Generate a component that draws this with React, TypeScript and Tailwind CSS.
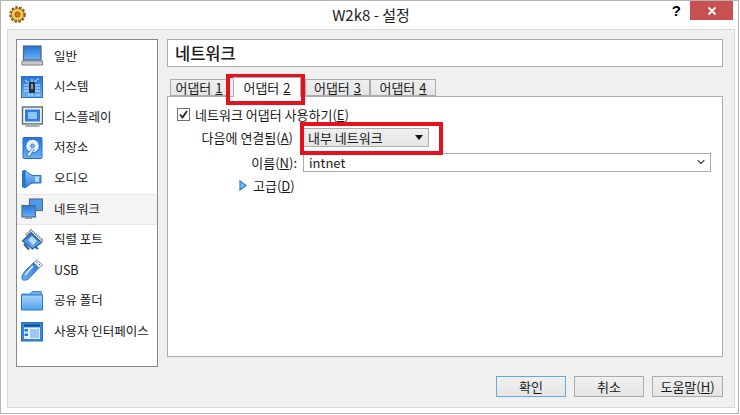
import type { ReactNode } from 'react'
import { ChevronDown } from 'lucide-react'

const font = { fontFamily: '"Noto Sans CJK KR", "Liberation Sans", sans-serif' }

function GearLogo() {
  return (
    <svg width="17" height="17" viewBox="0 0 17 17">
      <circle cx="8.5" cy="8.5" r="6.6" fill="#e3a82c" stroke="#8a5a12" strokeWidth="3.4" strokeDasharray="2.4 1.2" />
      <circle cx="8.5" cy="8.5" r="6" fill="#f4c95e" stroke="#b07a1e" strokeWidth="0.8" />
      <circle cx="8.5" cy="8.5" r="2.6" fill="#c67f16" stroke="#7d5110" strokeWidth="0.8" />
    </svg>
  )
}

const icons: Record<string, ReactNode> = {
  general: (
    <>
      <rect x="2.5" y="1" width="17.5" height="14" fill="url(#blue)" stroke="#5d6872" strokeWidth="1.3" />
      <path d="M1 16 H21.5 V20 H1 Z" fill="#e6e8ea" stroke="#69727b" />
      <path d="M2 18 H20.5" stroke="#a4abb1" />
    </>
  ),
  system: (
    <>
      <rect x="0.5" y="0.5" width="21" height="21" fill="url(#blue)" stroke="#2a6fc4" />
      <path d="M3 9 H8 M3 12 H8 M3 15 H8 M14 9 H19 M14 12 H19 M14 15 H19 M13 6 L18 2.5 M4 4 L8 7 M15 19 H19 M11 3 V6 M11 17 V20 M8 17 V20" stroke="#d4e9fc" strokeWidth="1" />
      <rect x="8" y="6" width="6" height="11" fill="#26343f" />
      <rect x="10" y="8" width="2" height="5" fill="#8d98a0" />
    </>
  ),
  display: (
    <>
      <rect x="1.5" y="1" width="20" height="17" fill="#eef1f3" stroke="#5c6873" strokeWidth="1.4" />
      <rect x="4" y="3.5" width="15" height="12" fill="#2f7de0" />
      <rect x="7" y="6" width="9" height="7" fill="#8ec3f5" />
      <path d="M5 18.5 H18 L19 21 H4 Z" fill="#a9b1b8" />
    </>
  ),
  storage: (
    <>
      <rect x="2" y="0.5" width="19" height="21" rx="1" fill="url(#blue)" stroke="#2a6fc4" />
      <circle cx="11.5" cy="9" r="6.8" fill="#e7f2fc" stroke="#2a6fc4" />
      <circle cx="11.5" cy="9" r="2" fill="#7fb8ee" stroke="#2a6fc4" strokeWidth="0.7" />
      <path d="M11 11.5 L5.5 18 L8.5 19.5 L13.5 12" fill="#dbe9f6" stroke="#2a6fc4" strokeWidth="0.8" />
    </>
  ),
  audio: (
    <>
      <rect x="1" y="2" width="4" height="18" rx="2" fill="#2478cf" />
      <path d="M4 2.5 C7 4.5 9 7 12 7.5 H20 V15 H12 C9 15.5 7 18 4 20 Z" fill="url(#bar)" stroke="#2a6fc4" />
      <rect x="14" y="8.5" width="4" height="5.5" fill="#b5daf8" />
    </>
  ),
  network: (
    <>
      <rect x="8.5" y="1" width="13" height="11.5" fill="#4a9cf0" stroke="#5c6f80" strokeWidth="1.2" />
      <rect x="1" y="7.5" width="13.5" height="11.5" fill="url(#blue)" stroke="#5c6f80" strokeWidth="1.2" />
      <path d="M4 19 H11 V21 H4 Z" fill="#8c9aa6" />
    </>
  ),
  serial: (
    <>
      <path d="M1.5 12 L10 3.5 L20.5 13.5 L11.5 20 Z" fill="url(#blue)" stroke="#2f5d8c" strokeWidth="1.2" />
      <path d="M5 6 L10 1 L21.5 11 L19.5 15" fill="none" stroke="#77838d" strokeWidth="1.8" strokeDasharray="1.5 0.7" />
      <path d="M7 11 L11 7 L16 12 L12 16 Z" fill="#bcdffa" />
      <path d="M3 15 L8 20.5 M14 17.5 L17 20" stroke="#2f5d8c" strokeWidth="2" />
    </>
  ),
  usb: (
    <>
      <path d="M13 3.5 L18 8.5 L8 19.5 C5 22 1 21.5 0.8 19.5 C1 16 3 13 5 11 Z" fill="url(#blue)" stroke="#2a6fc4" />
      <path d="M4 16 L12 7" stroke="#c4e2fb" strokeWidth="2" />
      <path d="M16 0.8 L21.5 6 L18 9 L12.5 3.5 Z" fill="#eceff1" stroke="#6d7780" strokeWidth="0.8" />
      <path d="M15.5 3.5 h1 M18 5.5 h1" stroke="#4d5760" />
    </>
  ),
  folder: (
    <>
      <path d="M1 4 H9 L11 1.5 H20.5 V6 H1 Z" fill="#6db0f2" stroke="#2a78d0" strokeWidth="0.8" />
      <rect x="0.5" y="5" width="21" height="15" fill="url(#folder)" stroke="#2a78d0" />
    </>
  ),
  ui: (
    <>
      <rect x="0.5" y="1.5" width="21" height="18.5" fill="#3584df" stroke="#2a6fc4" />
      <rect x="3" y="3.5" width="16" height="2" fill="#17467f" />
      <rect x="3" y="6.5" width="16" height="11.5" fill="#e5f1fc" />
      <rect x="9" y="8" width="9" height="9" fill="#9cc8f4" />
      <rect x="3.5" y="8" width="3.5" height="2.5" fill="#2878d2" />
      <rect x="3.5" y="12.5" width="3.5" height="2.5" fill="#2878d2" />
    </>
  ),
}

const menu = [
  { key: 'general', label: '일반' },
  { key: 'system', label: '시스템' },
  { key: 'display', label: '디스플레이' },
  { key: 'storage', label: '저장소' },
  { key: 'audio', label: '오디오' },
  { key: 'network', label: '네트워크', active: true },
  { key: 'serial', label: '직렬 포트' },
  { key: 'usb', label: 'USB' },
  { key: 'folder', label: '공유 폴더' },
  { key: 'ui', label: '사용자 인터페이스' },
]

function Tab({ label, hot, active, className }: { label: string; hot: string; active?: boolean; className: string }) {
  return (
    <div
      className={`flex items-center justify-center border border-[#acacac] pb-[1px] ${className} ${
        active ? 'h-[20px] border-b-0 bg-white' : 'h-[17px] bg-gradient-to-b from-[#f0f0f0] to-[#e5e5e5]'
      }`}
    >
      {label} <span className="ml-1 underline">{hot}</span>
    </div>
  )
}

export default function App() {
  return (
    <div className="h-[415px] w-[740px] bg-white">
      <div style={font} className="relative flex h-[414px] w-[739px] flex-col overflow-hidden border border-[#b4b4b4] bg-white pr-[3px] pl-[6px] text-[13px] leading-none text-[#1a1a1a]">
        <svg width="0" height="0" className="absolute">
          <defs>
            <linearGradient id="blue" x1="0" y1="0" x2="0" y2="1">
              <stop offset="0" stopColor="#2274dc" />
              <stop offset="1" stopColor="#6ab2f5" />
            </linearGradient>
            <linearGradient id="bar" x1="0" y1="0" x2="0" y2="1">
              <stop offset="0" stopColor="#8cc4f5" />
              <stop offset="1" stopColor="#2a7fd8" />
            </linearGradient>
            <linearGradient id="folder" x1="0" y1="0" x2="0" y2="1">
              <stop offset="0" stopColor="#a8d6fa" />
              <stop offset="1" stopColor="#4fa2ef" />
            </linearGradient>
          </defs>
        </svg>

        <header className="relative flex h-[28px] shrink-0 items-center justify-center pb-[2px]">
          <div className="absolute top-[5px] left-[2px]"><GearLogo /></div>
          <span className="text-[15px] text-[#222]">W2k8 - 설정</span>
          <span className="absolute top-[2px] right-[54px] text-[15px] font-bold text-black" style={{ fontFamily: '"Liberation Sans", sans-serif' }}>?</span>
          <div className="absolute top-0 right-[2px] flex h-[19px] w-[43px] items-center justify-center bg-[#c75050]">
            <svg width="10" height="10" viewBox="0 0 10 10"><path d="M1.5 1.5 L8.5 8.5 M8.5 1.5 L1.5 8.5" stroke="#fff" strokeWidth="1.8" /></svg>
          </div>
        </header>

        <div className="flex h-[379px] flex-col border border-[#d9d9d9] bg-[#f0f0f0]">
          <div className="flex h-[327px] gap-[9px] pt-[9px] pl-[8px]">
            <nav className="flex h-[328px] w-[142px] shrink-0 flex-col border border-[#828790] bg-white pt-[1px]">
              {menu.map((m) => (
                <div
                  key={m.key}
                  className={`flex h-[30.6px] shrink-0 items-center gap-[11px] pl-[4px] ${
                    m.active ? 'border-y border-[#e6e6e6] bg-[#f5f5f5]' : ''
                  }`}
                >
                  <svg width="22" height="22" viewBox="0 0 22 22" className="shrink-0">{icons[m.key]}</svg>
                  <span className="pb-[1px] text-[12.5px] whitespace-nowrap">{m.label}</span>
                </div>
              ))}
            </nav>

            <main className="flex w-[556px] flex-col">
              <div className="flex h-[28px] shrink-0 items-center border border-[#acacac] bg-white pl-[7px] text-[16.5px] font-medium">네트워크</div>
              <div className="flex h-[29px] shrink-0 items-end pl-[3px]">
                <Tab label="어댑터" hot="1" className="w-[58px]" />
                <Tab label="어댑터" hot="2" active className="relative z-10 mr-[4px] mb-[-1px] ml-[5px] w-[68px]" />
                <Tab label="어댑터" hot="3" className="w-[65px]" />
                <Tab label="어댑터" hot="4" className="w-[66px]" />
              </div>
              <section className="flex h-[270px] flex-col border border-[#acacac] bg-white">
                <label className="mt-[9px] ml-[9px] flex h-[16px] items-center gap-[5px]">
                  <span className="flex h-[13px] w-[13px] items-center justify-center border border-[#707070] bg-white">
                    <svg width="11" height="11" viewBox="0 0 11 11"><path d="M2 5.5 L4.5 8.5 L9 2" fill="none" stroke="#222" strokeWidth="1.8" /></svg>
                  </span>
                  <span>네트워크 어댑터 사용하기(<span className="underline">E</span>)</span>
                </label>
                <div className="mt-[6px] flex h-[19px] items-center">
                  <span className="w-[135px] pr-[10px] pb-[1px] text-right whitespace-nowrap">다음에 연결됨(<span className="underline">A</span>)</span>
                  <div className="flex h-[19px] w-[126px] items-center justify-between border border-[#acacac] bg-gradient-to-b from-[#f0f0f0] to-[#e5e5e5] pr-[5px] pb-[1px] pl-[4px]">
                    <span>내부 네트워크</span>
                    <svg width="8" height="5" viewBox="0 0 8 5"><path d="M0 0 H8 L4 5 Z" fill="#111" /></svg>
                  </div>
                </div>
                <div className="mt-[6px] flex h-[19px] items-center">
                  <span className="w-[135px] pr-[6px] pb-[1px] text-right whitespace-nowrap">이름(<span className="underline">N</span>):</span>
                  <div className="flex h-[19px] w-[408px] items-center justify-between border border-[#acacac] bg-white pr-[3px] pb-[1px] pl-[5px]">
                    <span>intnet</span>
                    <ChevronDown size={12} strokeWidth={2.2} className="text-[#444]" />
                  </div>
                </div>
                <div className="mt-[5px] flex h-[16px] items-center pl-[71px]">
                  <svg width="8" height="11" viewBox="0 0 8 11" className="mr-[6px]"><path d="M1 1 L7 5.5 L1 10 Z" fill="#7cc0f2" stroke="#2b7fd0" strokeWidth="1.2" /></svg>
                  <span>고급(<span className="underline">D</span>)</span>
                </div>
              </section>
            </main>
          </div>

          <footer className="mt-auto flex justify-end gap-[8px] pr-[11px] pb-[10px]">
            <button className="h-[21px] w-[70px] border border-[#5fa9e8] bg-gradient-to-b from-[#f0f0f0] to-[#e5e5e5] pb-[1px]">확인</button>
            <button className="h-[21px] w-[70px] border border-[#acacac] bg-gradient-to-b from-[#f0f0f0] to-[#e5e5e5] pb-[1px]">취소</button>
            <button className="h-[21px] w-[71px] border border-[#acacac] bg-gradient-to-b from-[#f0f0f0] to-[#e5e5e5] pb-[1px]">도움말(<span className="underline">H</span>)</button>
          </footer>
        </div>

        {/* red annotations drawn over the dialog */}
        <div className="pointer-events-none absolute top-[73px] left-[225px] h-[31px] w-[79px] border-[4px] border-[#e4121f]" />
        <div className="pointer-events-none absolute top-[121px] left-[299px] h-[33px] w-[143px] border-[4px] border-[#e4121f]" />
      </div>
    </div>
  )
}
